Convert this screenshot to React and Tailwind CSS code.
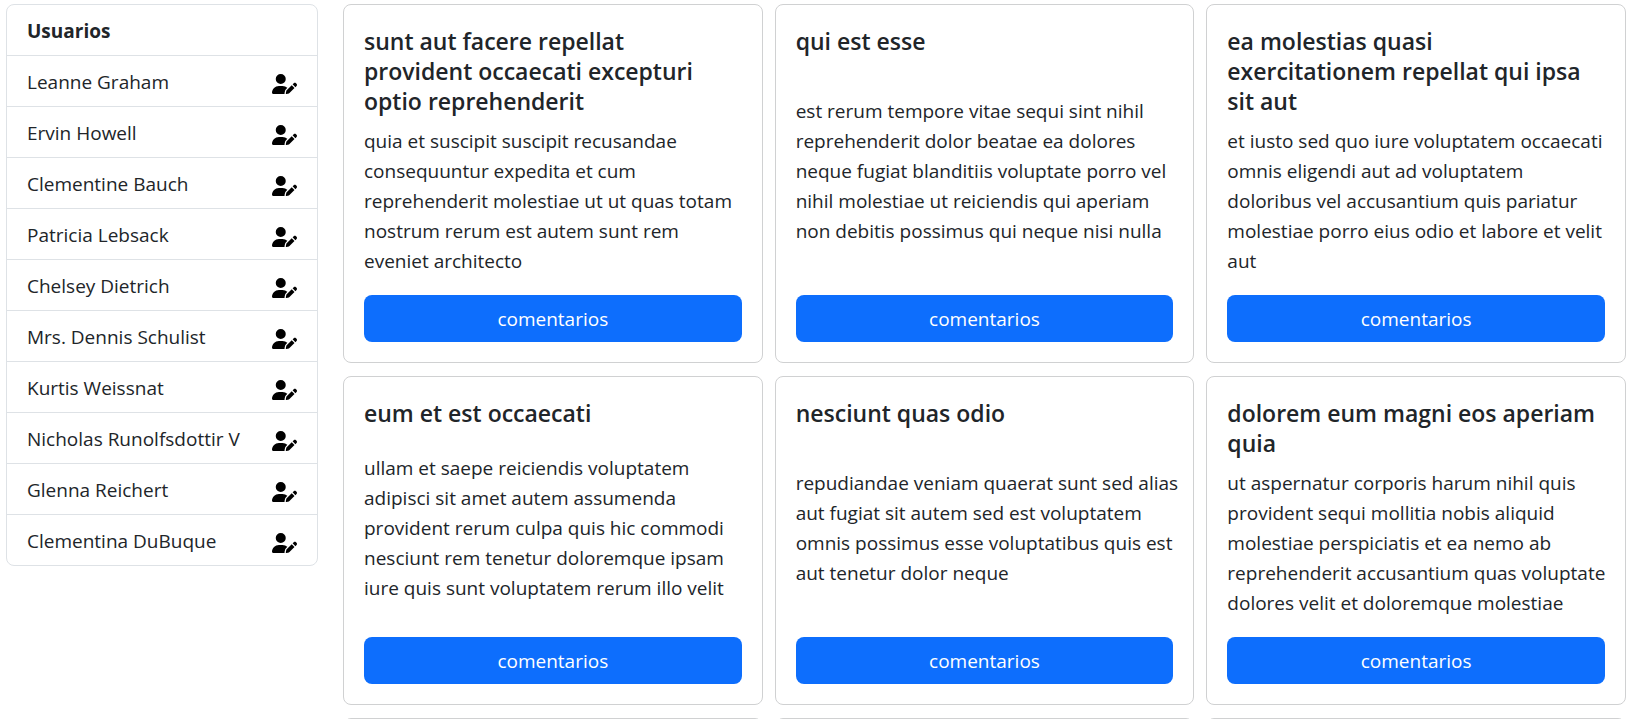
import { FaUserPen } from "react-icons/fa6";

const users = [
  "Leanne Graham",
  "Ervin Howell",
  "Clementine Bauch",
  "Patricia Lebsack",
  "Chelsey Dietrich",
  "Mrs. Dennis Schulist",
  "Kurtis Weissnat",
  "Nicholas Runolfsdottir V",
  "Glenna Reichert",
  "Clementina DuBuque",
];

const posts = [
  {
    title: "sunt aut facere repellat\nprovident occaecati excepturi\noptio reprehenderit",
    body: "quia et suscipit suscipit recusandae\nconsequuntur expedita et cum\nreprehenderit molestiae ut ut quas totam\nnostrum rerum est autem sunt rem\neveniet architecto",
  },
  {
    title: "qui est esse",
    body: "est rerum tempore vitae sequi sint nihil\nreprehenderit dolor beatae ea dolores\nneque fugiat blanditiis voluptate porro vel\nnihil molestiae ut reiciendis qui aperiam\nnon debitis possimus qui neque nisi nulla",
  },
  {
    title: "ea molestias quasi\nexercitationem repellat qui ipsa\nsit aut",
    body: "et iusto sed quo iure voluptatem occaecati\nomnis eligendi aut ad voluptatem\ndoloribus vel accusantium quis pariatur\nmolestiae porro eius odio et labore et velit\naut",
  },
  {
    title: "eum et est occaecati",
    body: "ullam et saepe reiciendis voluptatem\nadipisci sit amet autem assumenda\nprovident rerum culpa quis hic commodi\nnesciunt rem tenetur doloremque ipsam\niure quis sunt voluptatem rerum illo velit",
  },
  {
    title: "nesciunt quas odio",
    body: "repudiandae veniam quaerat sunt sed alias\naut fugiat sit autem sed est voluptatem\nomnis possimus esse voluptatibus quis est\naut tenetur dolor neque",
  },
  {
    title: "dolorem eum magni eos aperiam\nquia",
    body: "ut aspernatur corporis harum nihil quis\nprovident sequi mollitia nobis aliquid\nmolestiae perspiciatis et ea nemo ab\nreprehenderit accusantium quas voluptate\ndolores velit et doloremque molestiae",
  },
];

function UserList() {
  return (
    <aside className="w-78 shrink-0">
      <ul className="divide-y divide-[#dee2e6] rounded-lg border border-[#dee2e6]">
        <li className="px-5 pt-[11px] pb-[9px] font-bold">Usuarios</li>
        {users.map((name) => (
          <li key={name} className="flex items-end justify-between px-5 pt-[11px] pb-[9px]">
            <span>{name}</span>
            <button type="button" aria-label={`Editar ${name}`} className="cursor-pointer pb-[3px] text-black">
              <FaUserPen className="h-5 w-[25px]" />
            </button>
          </li>
        ))}
      </ul>
    </aside>
  );
}

function PostCard({ title, body }) {
  return (
    <article className="flex flex-col justify-between rounded-lg border border-[#d0d1d2] px-5 pt-[21px] pb-5">
      <h2 className="mb-[10px] text-[23px] leading-[30px] font-semibold whitespace-pre">{title}</h2>
      <p className="mb-[19px] whitespace-pre">{body}</p>
      <button type="button" className="h-[47px] w-full cursor-pointer rounded-lg bg-[#0d6efd] pt-px text-white">
        comentarios
      </button>
    </article>
  );
}

function PendingCard() {
  return <article aria-busy="true" className="h-80 rounded-lg border border-[#d0d1d2]" />;
}

export default function App() {
  return (
    <div className="flex h-screen items-start gap-[25px] overflow-hidden bg-white pt-1 pr-[13px] pl-[6px] font-['Open_Sans','Noto_Sans',sans-serif] text-[19px] leading-[30px] text-[#212529]">
      <UserList />
      <main className="grid min-w-0 flex-1 grid-cols-3 gap-x-3 gap-y-[13px]">
        {posts.map((post) => (
          <PostCard key={post.title} {...post} />
        ))}
        <PendingCard />
        <PendingCard />
        <PendingCard />
      </main>
    </div>
  );
}
